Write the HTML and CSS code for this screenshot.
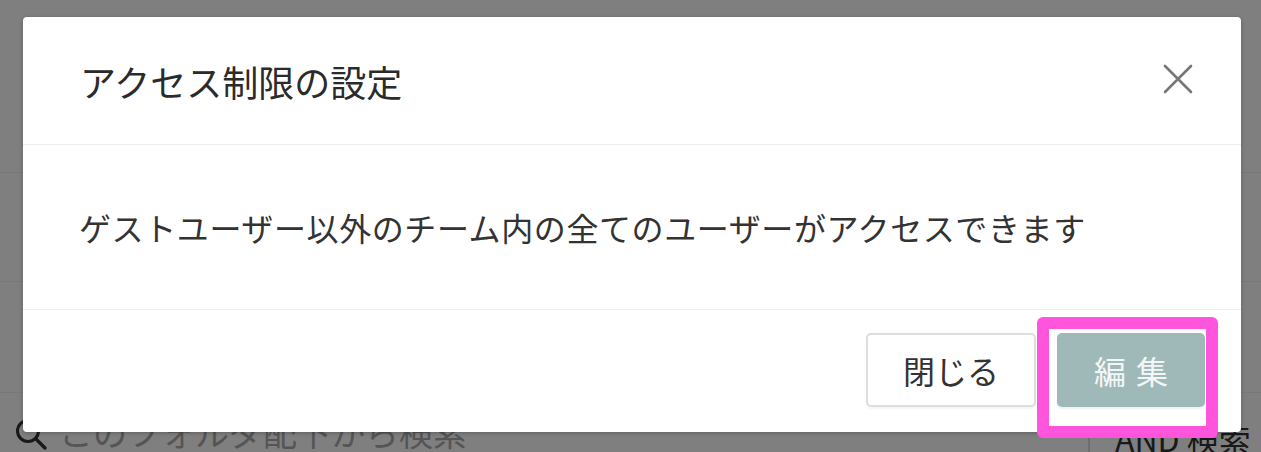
FILE: index.html
```html
<!DOCTYPE html>
<html lang="ja">
<head>
<meta charset="utf-8">
<title>アクセス制限の設定</title>
<link rel="stylesheet" href="styles.css">
</head>
<body>
<div class="page">
  <div class="page-top"></div>
  <div class="page-row"></div>
  <div class="page-row page-row-b"></div>
  <div class="search-bar">
    <div class="search-field">
      <svg class="search-icon" width="34" height="34" viewBox="0 0 34 34" aria-hidden="true">
        <circle cx="14" cy="14" r="10.5" fill="none" stroke="#333" stroke-width="3"/>
        <path d="M21.5 21.5 L31 31" stroke="#333" stroke-width="3.4" stroke-linecap="round"/>
      </svg>
      <span class="search-placeholder">このフォルダ配下から検索</span>
    </div>
    <div class="search-mode">AND 検索</div>
  </div>
</div>

<div class="overlay"></div>

<div class="modal" role="dialog" aria-labelledby="modal-title">
  <div class="modal-header">
    <h2 class="modal-title" id="modal-title">アクセス制限の設定</h2>
    <button class="modal-close" aria-label="閉じる">
      <svg width="30" height="30" viewBox="0 0 30 30" aria-hidden="true">
        <path d="M2 2 L28 28 M28 2 L2 28" stroke="#777" stroke-width="2.6" stroke-linecap="round"/>
      </svg>
    </button>
  </div>
  <div class="modal-body">
    <p class="modal-text">ゲストユーザー以外のチーム内の全てのユーザーがアクセスできます</p>
  </div>
  <div class="modal-footer">
    <button class="btn btn-default">閉じる</button>
    <button class="btn btn-primary">編集</button>
  </div>
</div>

<div class="highlight"></div>
</body>
</html>
```

FILE: styles.css
```css
html, body {
  margin: 0;
  padding: 0;
}

body {
  width: 1261px;
  height: 452px;
  overflow: hidden;
  position: relative;
  background: #fff;
  font-family: "Noto Sans CJK JP", "Noto Sans", sans-serif;
  color: #333;
}

/* page behind the dialog */
.page {
  display: flex;
  flex-direction: column;
}

.page-top {
  height: 172px;
  border-bottom: 1px solid #f0f0f0;
}

.page-row {
  height: 108px;
  border-bottom: 1px solid #f0f0f0;
}

.page-row-b {
  height: 110px;
}

.search-bar {
  height: 78px;
  display: flex;
  align-items: center;
}

.search-field {
  flex: 1;
  display: flex;
  align-items: center;
  gap: 11px;
  padding-left: 14px;
}

.search-icon {
  flex: none;
  margin-top: 4px;
}

.search-placeholder {
  font-size: 34px;
  color: #aaa;
  line-height: 1;
}

.search-mode {
  width: 146px;
  align-self: stretch;
  margin-top: 16px;
  border-left: 2px solid #ddd;
  padding-left: 25px;
  font-size: 32px;
  line-height: 58px;
  color: #333;
  white-space: nowrap;
}

/* overlay */
.overlay {
  position: absolute;
  inset: 0;
  background: rgba(0, 0, 0, 0.5);
}

/* modal */
.modal {
  position: absolute;
  left: 23px;
  top: 17px;
  width: 1218px;
  height: 415px;
  background: #fff;
  border-radius: 4px;
  box-shadow: 0 1px 4px rgba(0, 0, 0, 0.25);
  display: flex;
  flex-direction: column;
}

.modal-header {
  height: 127px;
  border-bottom: 1px solid #ececec;
  display: flex;
  align-items: center;
  justify-content: space-between;
  padding: 0 48px 0 57px;
}

.modal-title {
  margin: 0;
  font-size: 36px;
  font-weight: 400;
  color: #2b2b2b;
  line-height: 1;
}

.modal-close {
  border: 0;
  background: none;
  padding: 0;
  width: 30px;
  height: 30px;
  margin-top: -4px;
  cursor: pointer;
  display: flex;
}

.modal-body {
  height: 164px;
  border-bottom: 1px solid #ececec;
  display: flex;
  align-items: center;
  padding: 0 56px;
}

.modal-text {
  margin: 0;
  font-size: 32px;
  letter-spacing: 0.6px;
  line-height: 1;
  color: #333;
}

.modal-footer {
  flex: 1;
  display: flex;
  align-items: center;
  justify-content: flex-end;
  gap: 21px;
  padding: 0 36px 2px 0;
}

.btn {
  height: 74px;
  border-radius: 5px;
  font-family: inherit;
  font-size: 32px;
  line-height: 1;
  cursor: pointer;
}

.btn-default {
  width: 170px;
  background: #fff;
  border: 2px solid #dedede;
  color: #333;
  box-shadow: 0 2px 2px rgba(0, 0, 0, 0.04);
}

.btn-primary {
  width: 148px;
  background: #9fb9b9;
  border: 0;
  color: rgba(255, 255, 255, 0.9);
  letter-spacing: 10px;
  text-indent: 10px;
  box-shadow: 0 2px 2px rgba(0, 0, 0, 0.06);
}

/* annotation highlight */
.highlight {
  position: absolute;
  left: 1037px;
  top: 317px;
  width: 157px;
  height: 97px;
  border: 12px solid #ff55dd;
  border-radius: 6px;
}
```
